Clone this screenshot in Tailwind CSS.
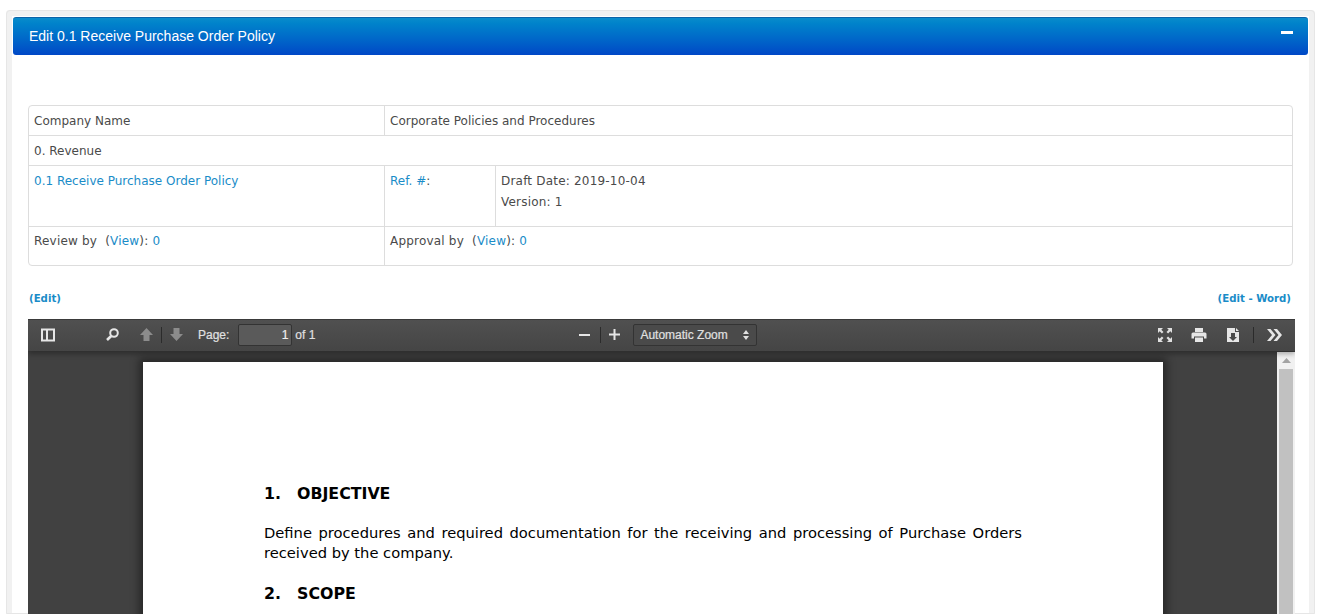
<!DOCTYPE html>
<html><head><meta charset="utf-8"><script src="https://cdn.jsdelivr.net/npm/@tailwindcss/browser@4"></script></head>
<body class="bg-white h-[614px] overflow-hidden font-['DejaVu_Sans',sans-serif]">
<div class="mx-[6px] mt-[10px] w-[1309px] h-[604px] overflow-hidden border-[6px] border-b-0 border-[#f1f1f1] rounded-t-[4px] outline-1 outline-[#e6e6e6] -outline-offset-1 pt-px">
  <div class="mx-px h-[38px] flex items-center justify-between pl-[16px] pr-[15px] rounded-[3px] border-t border-[#0b63a8] bg-gradient-to-b from-[#0a8ccb] to-[#0047c6] text-white font-['Liberation_Sans',sans-serif] text-[14px]">
    <span>Edit 0.1 Receive Purchase Order Policy</span>
    <span class="w-[12px] h-[3px] bg-white mb-[8px]"></span>
  </div>
  <div class="px-[16px] pt-[50px]">
    <table class="w-[1265px] border-separate border-spacing-0 border border-[#dddddd] rounded-[4px] text-[12px] text-[#4a4a4a] table-fixed">
      <colgroup><col class="w-[356px]"><col class="w-[111px]"><col></colgroup>
      <tr class="h-[30px]"><td class="px-[5px] pt-[1px] border-b border-[#dddddd] border-r">Company Name</td><td colspan="2" class="px-[5px] pt-[1px] border-b border-[#dddddd]">Corporate Policies and Procedures</td></tr>
      <tr class="h-[30px]"><td colspan="3" class="px-[5px] pt-[1px] border-b border-[#dddddd]">0. Revenue</td></tr>
      <tr class="h-[61px]">
        <td class="px-[5px] pt-[6px] align-top border-b border-r border-[#dddddd] text-[#1a8cc8]">0.1 Receive Purchase Order Policy</td>
        <td class="px-[5px] pt-[6px] align-top border-b border-r border-[#dddddd]"><span class="text-[#1a8cc8]">Ref. #</span>:</td>
        <td class="px-[5px] pt-[5px] align-top border-b border-[#dddddd] leading-[21px] tracking-[0.2px]"><div>Draft Date: 2019-10-04</div><div>Version: 1</div></td>
      </tr>
      <tr class="h-[38px]">
        <td class="px-[5px] pt-[5px] align-top border-r border-[#dddddd] tracking-[0.2px]">Review by &nbsp;(<span class="text-[#1a8cc8]">View</span>): <span class="text-[#1a8cc8]">0</span></td>
        <td colspan="2" class="px-[5px] pt-[5px] align-top tracking-[0.2px]">Approval by &nbsp;(<span class="text-[#1a8cc8]">View</span>): <span class="text-[#1a8cc8]">0</span></td>
      </tr>
    </table>
    <div class="flex justify-between pt-px mt-[26px] h-[12px] w-[1265px] pl-px pr-[2px] text-[10.2px] leading-[12px] font-bold text-[#1a8cc8]"><span>(Edit)</span><span>(Edit - Word)</span></div>
  </div>
  <div class="relative ml-[16px] mt-[15px] w-[1267px] h-[300px] bg-[#414141] overflow-hidden">
    <div class="relative z-10 h-[32px] bg-gradient-to-b from-[#505050] to-[#454545] border-t border-[#3a3a3a] shadow-[0_3px_5px_rgba(0,0,0,0.3)] flex items-center pb-[2px] text-[#e0e0e0] font-['Liberation_Sans',sans-serif] text-[12px]">
      <svg class="ml-[13px] w-[14px] h-[14px]" viewBox="0 0 14 14"><path fill="none" stroke="#e6e6e6" stroke-width="2" d="M1 1.500h12v11H1zM6 1.500v11"/></svg>
      <svg class="ml-[50px] w-[15px] h-[15px]" viewBox="0 0 15 15"><circle cx="9" cy="6" r="3.800" fill="none" stroke="#e6e6e6" stroke-width="2"/><path d="M6.200 9 2 13" stroke="#e6e6e6" stroke-width="2.600"/></svg>
      <svg class="ml-[19px] w-[15px] h-[15px]" viewBox="0 0 15 15"><path fill="#8c8c8c" d="M7.500 1 14 8h-3.500v6h-6V8H1z"/></svg>
      <span class="ml-[7px] w-px h-[16px] bg-[#2b2b2b]"></span>
      <svg class="ml-[7px] w-[15px] h-[15px]" viewBox="0 0 15 15"><path fill="#8c8c8c" d="M7.500 14 14 7h-3.500V1h-6v6H1z"/></svg>
      <span class="ml-[14px] [-webkit-text-stroke:0.2px_#e0e0e0]">Page:</span>
      <span class="ml-[9px] w-[54px] h-[22px] bg-[#5a5a5a] border border-[#333] rounded-[2px] flex items-center justify-end pr-[3px] text-[#f0f0f0] [-webkit-text-stroke:0.2px_#f0f0f0]">1</span>
      <span class="ml-[3px] [-webkit-text-stroke:0.2px_#e0e0e0]">of 1</span>
      <span class="ml-[264px] w-[11px] h-[2px] bg-[#e6e6e6]"></span>
      <span class="ml-[10px] w-px h-[16px] bg-[#2b2b2b]"></span>
      <svg class="ml-[8px] w-[11px] h-[11px]" viewBox="0 0 11 11"><path d="M0 5.500h11M5.500 0v11" stroke="#e6e6e6" stroke-width="2"/></svg>
      <span class="ml-[13px] w-[124px] h-[22px] bg-[#4a4a4a] border border-[#333] rounded-[2px] flex items-center pl-[6px] pr-[7px] justify-between"><span class="[-webkit-text-stroke:0.2px_#e0e0e0]">Automatic Zoom</span><svg class="w-[6px] h-[10px]" viewBox="0 0 6 10"><path fill="#e0e0e0" d="M3 0l3 4H0zM3 10 0 6h6z"/></svg></span>
      <svg class="ml-[400px] w-[16px] h-[16px]" viewBox="0 0 16 16"><path fill="#e0e0e0" d="M1 1h5L4.300 2.700 6.500 4.900 4.900 6.500 2.700 4.300 1 6zM15 1v5L13.300 4.300 11.100 6.500 9.500 4.900 11.700 2.700 10 1zM1 15v-5L2.700 11.700 4.900 9.500 6.500 11.100 4.300 13.300 6 15zM15 15h-5L11.700 13.300 9.500 11.100 11.100 9.500 13.300 11.700 15 10z"/></svg>
      <svg class="ml-[18px] w-[16px] h-[16px]" viewBox="0 0 16 16"><path fill="#e6e6e6" d="M4 1h8v4H4zM2 5.500h12a1.500 1.500 0 0 1 1.500 1.500v4.500H13V9.500H3v2H.5V7A1.500 1.500 0 0 1 2 5.500zM4 10.500h8V15H4z"/></svg>
      <svg class="ml-[19px] w-[14px] h-[16px]" viewBox="0 0 14 16"><path fill="#e6e6e6" fill-rule="evenodd" d="M1 1h8v4h4v10H1zM5 6v4H3l4 4 4-4H9V6zM10 1l3 3h-3z"/></svg>
      <span class="ml-[13px] w-px h-[16px] bg-[#2b2b2b]"></span>
      <svg class="ml-[13px] w-[15px] h-[12px]" viewBox="0 0 15 12"><path fill="#e6e6e6" d="M0 0h3.500l5 6-5 6H0l5-6zM6.500 0H10l5 6-5 6H6.500l5-6z"/></svg>
    </div>
    <div class="absolute left-[115px] top-[43px] w-[1020px] h-[300px] bg-white shadow-[0_0_8px_4px_rgba(0,0,0,0.4)] pl-[121px] pr-[141px] pt-[122px] text-black font-['DejaVu_Sans',sans-serif] text-[14.7px] leading-[20px]">
      <div class="font-bold text-[15.8px] flex"><span class="w-[33px]">1.</span><span>OBJECTIVE</span></div>
      <p class="mt-[19px] text-justify">Define procedures and required documentation for the receiving and processing of Purchase Orders received by the company.</p>
      <div class="mt-[21px] font-bold text-[15.8px] flex"><span class="w-[33px]">2.</span><span>SCOPE</span></div>
    </div>
    <div class="absolute right-0 top-[33px] w-[18px] bottom-0 bg-[#f1f1f1] flex flex-col items-center">
      <svg class="mt-[6px] w-[9px] h-[5px]" viewBox="0 0 9 5"><path fill="#a3a3a3" d="M4.500 0 9 5H0z"/></svg>
      <div class="mt-[6px] w-[14px] flex-1 bg-[#c1c1c1]"></div>
    </div>
  </div>
</div>
</body></html>
